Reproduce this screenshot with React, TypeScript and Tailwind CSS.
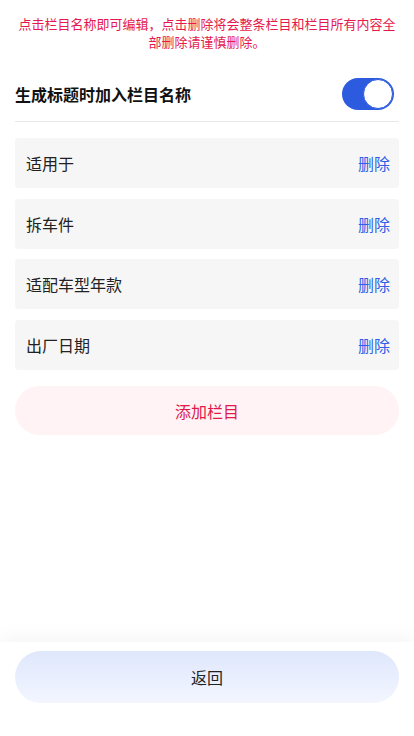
import React from "react";

const items = ["适用于", "拆车件", "适配车型年款", "出厂日期"];

export default function App() {
  return (
    <div
      className="flex h-[736px] w-full flex-col bg-white"
      style={{ fontFamily: '"Noto Sans CJK SC", "Noto Sans", sans-serif' }}
    >
      <main className="flex-1 px-[15px]">
        <p className="pt-[15px] text-center text-[13px] leading-[18px] text-[#e5194d]">
          点击栏目名称即可编辑，点击删除将会整条栏目和栏目所有内容全部删除请谨慎删除。
        </p>
        <div className="mt-[15px] flex items-center justify-between border-b border-[#e8e8e8] pt-3 pb-[11px]">
          <span className="text-[16px] font-bold text-[#111]">生成标题时加入栏目名称</span>
          <div className="mr-[5px] flex h-8 w-[52px] items-center justify-end rounded-full bg-[#2c5be0] p-[1px]">
            <div className="h-[30px] w-[30px] rounded-full border border-[#2c5be0] bg-white" />
          </div>
        </div>
        <div className="mt-4 flex flex-col gap-[10.5px]">
          {items.map((t) => (
            <div
              key={t}
              className="flex h-[50px] items-center justify-between rounded bg-[#f6f6f6] pl-[11px] pr-[9px]"
            >
              <span className="text-[16px] text-[#222]">{t}</span>
              <span className="text-[16px] text-[#2f60e6]">删除</span>
            </div>
          ))}
        </div>
        <button className="mt-[16.5px] flex h-[49px] w-full items-center justify-center rounded-full bg-[#fff3f5] text-[16px] text-[#e0194a]">
          添加栏目
        </button>
      </main>
      <footer className="bg-white px-[15px] pt-[9px] pb-[33px] shadow-[0_-6px_18px_rgba(0,0,0,0.04)]">
        <button className="flex h-[52px] w-full items-center justify-center rounded-full bg-gradient-to-b from-[#dfe7fc] to-[#f3f6ff] text-[16px] text-[#222]">
          返回
        </button>
      </footer>
    </div>
  );
}
